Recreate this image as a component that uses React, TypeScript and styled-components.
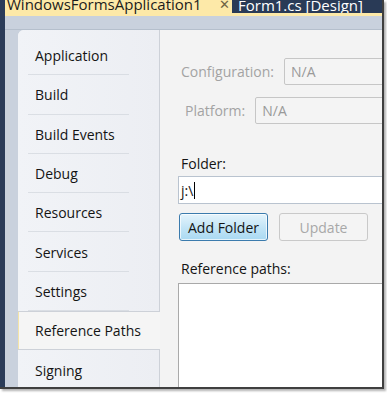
import React from "react";
import styled, { createGlobalStyle } from "styled-components";

const GlobalStyle = createGlobalStyle`
  html, body {
    margin: 0;
    padding: 0;
    background: #ffffff;
  }
  body {
    font-family: "Open Sans", "Noto Sans", sans-serif;
  }
`;

const navItems = [
  "Application",
  "Build",
  "Build Events",
  "Debug",
  "Resources",
  "Services",
  "Settings",
  "Reference Paths",
  "Signing",
];

const SELECTED = "Reference Paths";

export default function App() {
  return (
    <>
      <GlobalStyle />
      <Frame>
        <Window>
          <LeftStrip />
          <Main>
            <TabBar>
              <DocTab>
                <TabTitle>WindowsFormsApplication1</TabTitle>
                <CloseGlyph>✕</CloseGlyph>
              </DocTab>
              <InactiveTab>Form1.cs [Design]</InactiveTab>
            </TabBar>
            <Band />
            <Body>
              <Panel>
                <Nav>
                  {navItems.map((item) => (
                    <NavItem key={item} $selected={item === SELECTED}>
                      {item}
                    </NavItem>
                  ))}
                </Nav>
                <Content>
                  <FieldRow>
                    <DimLabel>Configuration:</DimLabel>
                    <Combo>N/A</Combo>
                  </FieldRow>
                  <FieldRow $indent={4}>
                    <DimLabel>Platform:</DimLabel>
                    <Combo>N/A</Combo>
                  </FieldRow>
                  <Divider />
                  <SectionLabel $top={11}>Folder:</SectionLabel>
                  <TextBox>
                    j:\<Caret />
                  </TextBox>
                  <ButtonRow>
                    <Button $primary>Add Folder</Button>
                    <Button disabled>Update</Button>
                  </ButtonRow>
                  <SectionLabel $top={18} $bottom={5}>
                    Reference paths:
                  </SectionLabel>
                  <ListBox />
                </Content>
              </Panel>
            </Body>
          </Main>
        </Window>
      </Frame>
    </>
  );
}

const Frame = styled.div`
  width: 387px;
  height: 393px;
  overflow: hidden;
  background: #ffffff;
`;

const Window = styled.div`
  width: 382px;
  height: 387px;
  display: flex;
  border-right: 2px solid #3f3f3f;
  border-bottom: 2px solid #3f3f3f;
  box-shadow: 2px 2px 2px rgba(0, 0, 0, 0.3);
  overflow: hidden;
`;

const LeftStrip = styled.div`
  width: 5px;
  flex: none;
  background: #2b3c59;
`;

const Main = styled.div`
  flex: 1;
  min-width: 0;
  display: flex;
  flex-direction: column;
`;

const TabBar = styled.div`
  height: 16px;
  flex: none;
  display: flex;
  align-items: flex-start;
  background: #fde9a8;
  overflow: hidden;
`;

const DocTab = styled.div`
  width: 227px;
  flex: none;
  display: flex;
  align-items: flex-start;
  padding-left: 2px;
  box-sizing: border-box;
`;

const TabTitle = styled.span`
  font-size: 15px;
  line-height: 15px;
  margin-top: -3px;
  color: #1c1c1c;
  white-space: nowrap;
`;

const CloseGlyph = styled.span`
  margin-left: auto;
  margin-right: 2px;
  margin-top: -2px;
  font-family: "DejaVu Sans", sans-serif;
  font-size: 13px;
  line-height: 14px;
  color: #6f6445;
`;

const InactiveTab = styled.div`
  flex: 1;
  height: 13px;
  background: #293a56;
  color: #ffffff;
  font-size: 15px;
  line-height: 15px;
  padding-left: 6px;
  white-space: nowrap;
  overflow: hidden;
  display: flex;
  align-items: flex-end;
`;

const Band = styled.div`
  height: 13px;
  flex: none;
  background: #c9d1dd;
  border-bottom: 1px solid #b5bfcc;
`;

const Body = styled.div`
  flex: 1;
  display: flex;
  background: #c9d1dd;
  padding-left: 13px;
  min-height: 0;
`;

const Panel = styled.div`
  flex: 1;
  display: flex;
  border-top-left-radius: 6px;
  background: #f3f3f3;
  overflow: hidden;
  min-width: 0;
`;

const Nav = styled.div`
  width: 142px;
  flex: none;
  padding-top: 6px;
  box-sizing: border-box;
  background: linear-gradient(90deg, #f1f3f7 0%, #eceef3 100%);
  border-right: 1px solid #cdd1d8;
  display: flex;
  flex-direction: column;
`;

const NavItem = styled.div<{ $selected?: boolean }>`
  height: 39.3px;
  flex: none;
  display: flex;
  align-items: center;
  font-size: 14px;
  color: #141414;
  position: relative;
  box-sizing: border-box;
  background: ${({ $selected }) => ($selected ? "#f5f5f5" : "transparent")};
  margin-right: ${({ $selected }) => ($selected ? "-1px" : "0")};
  margin-left: ${({ $selected }) => ($selected ? "-1px" : "0")};
  padding-left: ${({ $selected }) => ($selected ? "16px" : "17px")};
  border-top: ${({ $selected }) => ($selected ? "1px solid #cdd1d8" : "none")};
  border-bottom: ${({ $selected }) =>
    $selected ? "1px solid #cdd1d8" : "none"};
  border-left: ${({ $selected }) =>
    $selected ? "2px solid #f4e4a8" : "none"};

  &::after {
    content: "";
    position: absolute;
    left: 10px;
    right: 30px;
    bottom: 0;
    height: 1px;
    background: ${({ $selected }) =>
      $selected ? "transparent" : "rgba(200, 205, 214, 0.55)"};
  }
`;

const Content = styled.div`
  flex: 1;
  min-width: 0;
  padding: 28px 0 0 18px;
  overflow: hidden;
  display: flex;
  flex-direction: column;
`;

const FieldRow = styled.div<{ $indent?: number }>`
  display: flex;
  align-items: center;
  height: 27px;
  margin-bottom: 12px;
  padding-left: ${({ $indent }) => 3 + ($indent ?? 0)}px;
  white-space: nowrap;
`;

const DimLabel = styled.span`
  font-size: 14px;
  color: #a3a3a3;
  margin-right: 10px;
`;

const Combo = styled.div`
  flex: none;
  width: 200px;
  height: 27px;
  box-sizing: border-box;
  border: 1px solid #c6c6c6;
  border-radius: 2px;
  background: #f4f4f4;
  color: #9a9a9a;
  font-size: 14px;
  padding-left: 6px;
  display: flex;
  align-items: center;
`;

const Divider = styled.div`
  height: 1px;
  width: 260px;
  background: #c8c8c8;
  margin-top: 7px;
`;

const SectionLabel = styled.div<{ $top?: number; $bottom?: number }>`
  font-size: 14px;
  color: #141414;
  padding-left: 3px;
  margin-top: ${({ $top }) => $top ?? 10}px;
  margin-bottom: ${({ $bottom }) => $bottom ?? 3}px;
  line-height: 19px;
  height: 19px;
  white-space: nowrap;
`;

const TextBox = styled.div`
  flex: none;
  width: 260px;
  height: 28px;
  box-sizing: border-box;
  border: 1px solid #b9c3cf;
  background: #ffffff;
  font-size: 14px;
  color: #141414;
  padding-left: 2px;
  display: flex;
  align-items: center;
`;

const Caret = styled.span`
  display: inline-block;
  width: 1px;
  height: 17px;
  background: #000000;
  margin-left: 1px;
`;

const ButtonRow = styled.div`
  display: flex;
  gap: 11px;
  margin-top: 9px;
  padding-left: 1px;
`;

const Button = styled.button<{ $primary?: boolean }>`
  width: 89px;
  height: 28px;
  box-sizing: border-box;
  border-radius: 3px;
  font-family: "Open Sans", "Noto Sans", sans-serif;
  font-size: 14px;
  padding: 0;
  border: 1px solid ${({ $primary }) => ($primary ? "#3b7bad" : "#c9c9c9")};
  background: ${({ $primary }) =>
    $primary
      ? "linear-gradient(180deg, #e5f4fc 0%, #c4e5f6 50%, #a9d9f2 100%)"
      : "#f4f4f4"};
  color: ${({ $primary }) => ($primary ? "#141414" : "#a8a8a8")};
  box-shadow: ${({ $primary }) =>
    $primary ? "inset 0 0 0 1px rgba(255,255,255,0.7)" : "none"};
`;

const ListBox = styled.div`
  flex: none;
  width: 260px;
  height: 120px;
  box-sizing: border-box;
  border: 1px solid #a9a9a9;
  background: #ffffff;
`;
